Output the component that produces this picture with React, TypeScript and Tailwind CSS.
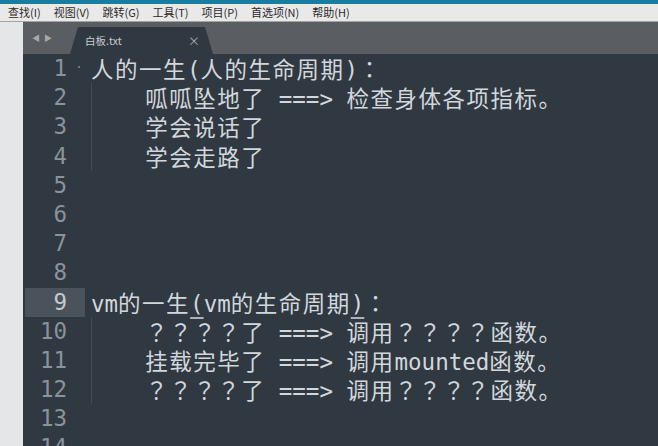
import React from "react";

const menus = ["查找(I)", "视图(V)", "跳转(G)", "工具(T)", "项目(P)", "首选项(N)", "帮助(H)"];

const lines: string[] = [
  "人的一生(人的生命周期)：",
  "    呱呱坠地了 ===> 检查身体各项指标。",
  "    学会说话了",
  "    学会走路了",
  "",
  "",
  "",
  "",
  "vm的一生(vm的生命周期)：",
  "    ？？？？了 ===> 调用？？？？函数。",
  "    挂载完毕了 ===> 调用mounted函数。",
  "    ？？？？了 ===> 调用？？？？函数。",
  "",
  "",
];

// lines that show the indent guide
const guided = [1, 2, 3, 9, 10, 11];

function Cjk({ text }: { text: string }) {
  // centered full-width punctuation comes from the TC face
  const parts = text.split(/([？：]+)/);
  return (
    <>
      {parts.map((p, i) =>
        i % 2 ? (
          <span key={i} className="font-['Noto_Sans_CJK_TC',sans-serif]">
            {p}
          </span>
        ) : (
          <React.Fragment key={i}>{p}</React.Fragment>
        )
      )}
    </>
  );
}

function Segs({ text }: { text: string }) {
  const parts = text.split(/([\u3000-\u303f\u4e00-\u9fff\uff00-\uffef]+)/);
  return (
    <>
      {parts.map((p, i) =>
        i % 2 ? (
          <span key={i} className="tracking-[1.5px] font-['Noto_Sans_CJK_SC',sans-serif]">
            <Cjk text={p} />
          </span>
        ) : (
          <React.Fragment key={i}>{p}</React.Fragment>
        )
      )}
    </>
  );
}

function Line9() {
  return (
    <>
      <Segs text="vm的一生" />
      <span className="underline decoration-[#aab2ba] underline-offset-[5px]">(</span>
      <Segs text="vm的生命周期" />
      <span className="underline decoration-[#aab2ba] underline-offset-[5px]">)</span>
      <Segs text="：" />
    </>
  );
}

export default function App() {
  return (
    <div className="w-[658px] h-[446px] overflow-hidden flex flex-col bg-[#e6e7e8] font-['Noto_Sans_CJK_SC',sans-serif]">
      <div className="h-[4px] shrink-0 bg-[#177ea3]" />
      <div className="h-[18px] shrink-0 flex items-center gap-[13px] pl-[8px] bg-[#e9e9e9] border-b border-[#a3a3a3] text-[11px] text-[#2a2a2a]">
        {menus.map((m) => (
          <span key={m}>{m}</span>
        ))}
      </div>
      <div className="flex flex-1 min-h-0">
        <div className="w-[23px] bg-[#e5e6e7]" />
        <div className="flex-1 flex flex-col min-w-0">
          <div className="h-[32px] shrink-0 bg-[#5a5d61] flex items-end">
            <div className="w-[47px] h-full flex items-center pl-[9px] gap-[4px] text-[8px] text-[#a5a9ad]">
              <span>◀</span>
              <span>▶</span>
            </div>
            <div className="w-[143px] h-[27px] bg-[#303841] [clip-path:polygon(8px_0,calc(100%_-_8px)_0,100%_100%,0_100%)] flex items-center pl-[15px] pr-[13px] text-[10.5px] text-[#c9ccd0]">
              <span className="flex-1">白板.txt</span>
              <span className="text-[12px] text-[#a7abaf]">×</span>
            </div>
          </div>
          <div className="flex-1 min-h-0 overflow-hidden bg-[#303841] flex font-['DejaVu_Sans_Mono','Noto_Sans_CJK_SC',monospace] text-[22.5px] text-[#d2d7dc]">
            <div className="w-[68px] flex flex-col">
              {lines.map((_, i) => (
                <div
                  key={i}
                  className={
                    "h-[29.2px] leading-[29.2px] shrink-0 ml-[2px] w-[60px] pr-[18px] text-right relative " +
                    (i === 8 ? "bg-[#4a535c] text-[#c4c9ce]" : "text-[#8b939a]")
                  }
                >
                  {i + 1}
                  {i === 0 && (
                    <span className="absolute left-[53px] top-[12px] w-[2px] h-[2px] bg-[#6c747c]" />
                  )}
                </div>
              ))}
            </div>
            <div className="flex-1 flex flex-col">
              {lines.map((l, i) => (
                <div
                  key={i}
                  className={
                    "h-[29.2px] leading-[29.2px] shrink-0 whitespace-pre " +
                    (guided.includes(i) ? "shadow-[inset_1px_0_0_#434c55]" : "")
                  }
                >
                  {i === 8 ? <Line9 /> : <Segs text={l} />}
                </div>
              ))}
            </div>
          </div>
        </div>
      </div>
    </div>
  );
}
